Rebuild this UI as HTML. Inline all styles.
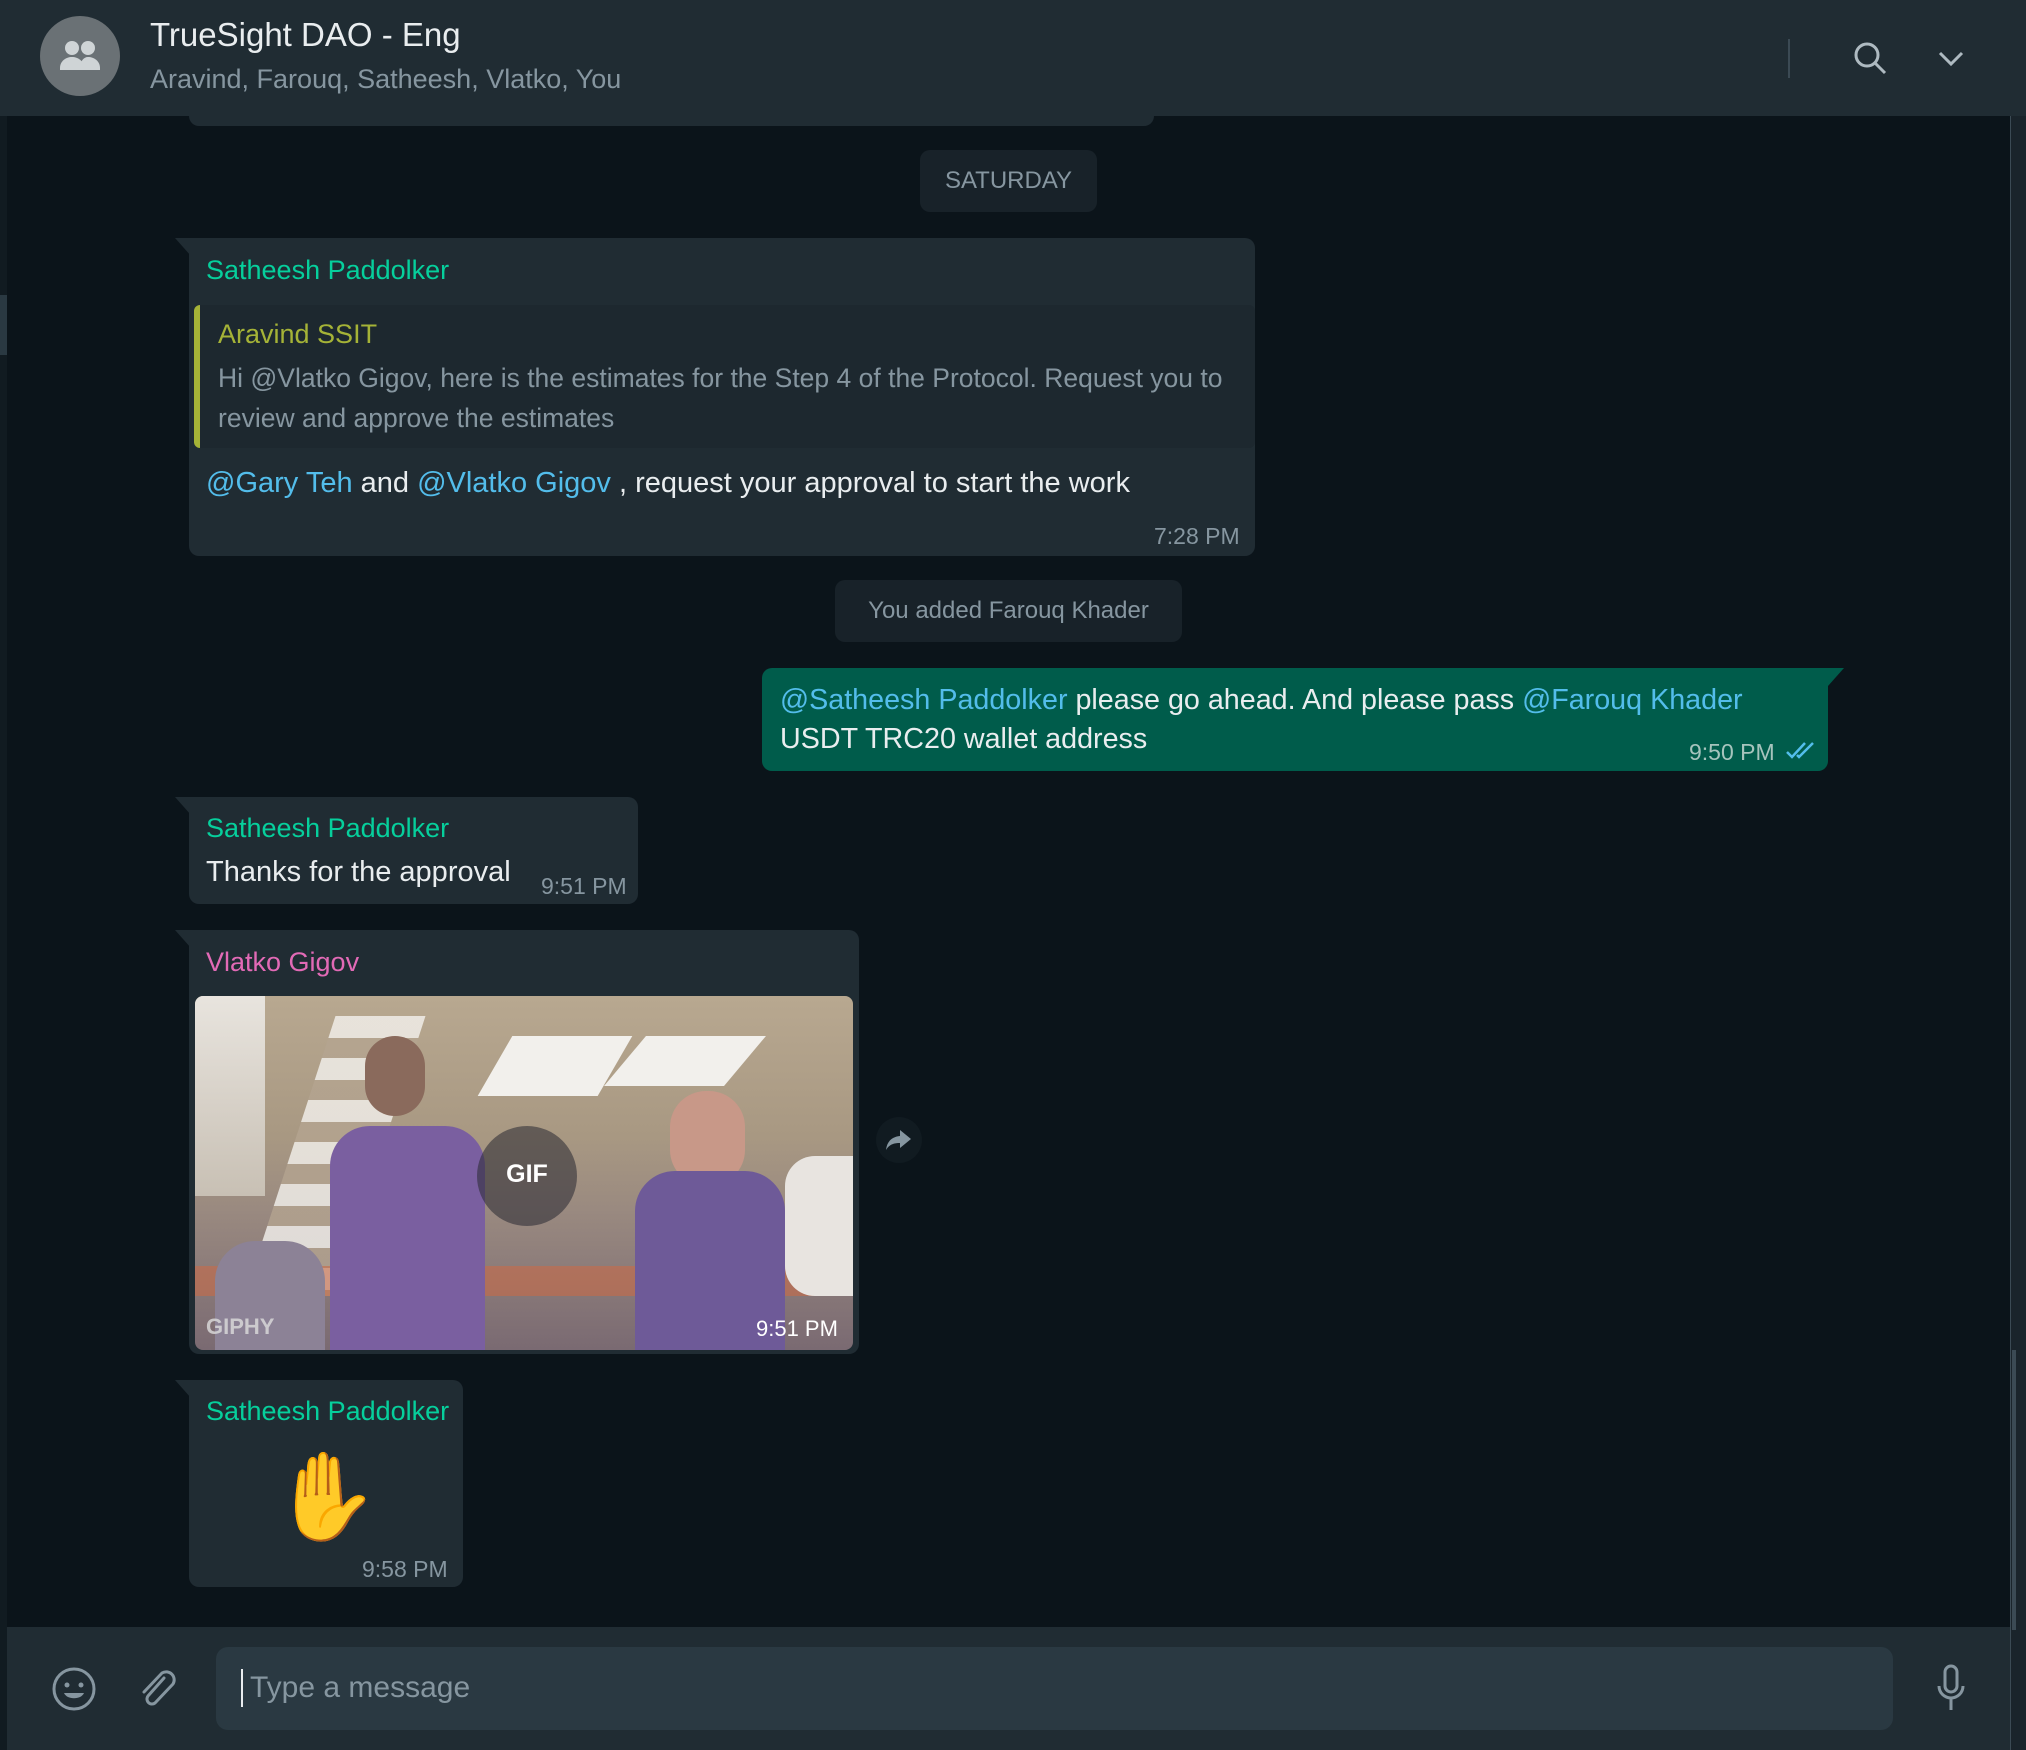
<!DOCTYPE html>
<html><head><meta charset="utf-8"><style>
*{margin:0;padding:0;box-sizing:border-box}
body{width:2026px;height:1750px;background:#0b141a;font-family:"Liberation Sans",sans-serif;position:relative;overflow:hidden}
.a{position:absolute}
.hdr{left:0;top:0;width:2026px;height:116px;background:#202c33}
.bub{background:#202c33;border-radius:10px}
.name{font-size:27px;white-space:nowrap}
.t{font-size:23px;color:#8696a0;white-space:nowrap}
.m{color:#53bdeb}
.txt{font-size:29px;color:#e9edef;white-space:nowrap}
.pill{background:#182229;border-radius:10px;color:#8696a0;font-size:24px;text-align:center}
</style></head><body>
<div class="a" style="left:0;top:0;width:7px;height:1750px;background:#111b21"></div>
<div class="a" style="left:0;top:295px;width:7px;height:60px;background:#2a3942"></div>
<div class="a" style="left:2010px;top:0;width:16px;height:1750px;background:#1a242b;border-left:1px solid #3b4a54"></div>
<div class="a" style="left:2012px;top:1350px;width:4px;height:280px;background:#3b4a54"></div>
<!-- header -->
<div class="a hdr"></div>
<div class="a" style="left:189px;top:112px;width:965px;height:14px;background:#202c33;border-radius:0 0 10px 10px"></div>
<div class="a" style="left:40px;top:16px;width:80px;height:80px;border-radius:50%;background:#6a7175"></div>
<svg class="a" style="left:52px;top:30px" width="56" height="50" viewBox="0 0 56 50"><circle cx="20" cy="18" r="7" fill="#cfd4d6"/><circle cx="36" cy="18" r="7" fill="#cfd4d6"/><path d="M8 38c0-7 6-11 12-11s12 4 12 11v2H8z" fill="#cfd4d6"/><path d="M28 38c0-7 4-11 8-11 6 0 12 4 12 11v2H30z" fill="#cfd4d6"/></svg>
<div class="a" style="left:150px;top:16px;font-size:33px;color:#e9edef">TrueSight DAO - Eng</div>
<div class="a" style="left:150px;top:64px;font-size:27px;color:#8696a0">Aravind, Farouq, Satheesh, Vlatko, You</div>
<div class="a" style="left:1788px;top:39px;width:2px;height:39px;background:#3b4a54"></div>
<svg class="a" style="left:1852px;top:40px" width="36" height="36" viewBox="0 0 36 36"><circle cx="15" cy="15" r="11" fill="none" stroke="#aebac1" stroke-width="3"/><path d="M23 23l10 10" stroke="#aebac1" stroke-width="3"/></svg>
<svg class="a" style="left:1937px;top:48px" width="28" height="20" viewBox="0 0 28 20"><path d="M3 5l11 11 11-11" fill="none" stroke="#aebac1" stroke-width="3"/></svg>
<!-- saturday -->
<div class="a pill" style="left:920px;top:150px;width:177px;height:62px;line-height:62px">SATURDAY</div>
<!-- bubble 1 -->
<div class="a bub" style="left:189px;top:238px;width:1066px;height:318px;border-top-left-radius:0"></div>
<div class="a" style="left:175px;top:238px;width:0;height:0;border-top:18px solid #202c33;border-left:16px solid transparent"></div>
<div class="a name" style="left:206px;top:255px;color:#06cf9c">Satheesh Paddolker</div>
<div class="a" style="left:194px;top:305px;width:1061px;height:143px;background:#1d282f;border-left:6px solid #a5b337;border-radius:6px"></div>
<div class="a name" style="left:218px;top:319px;color:#a5b337">Aravind SSIT</div>
<div class="a" style="left:218px;top:358px;font-size:26.5px;color:#8696a0;line-height:40px">Hi @Vlatko Gigov, here is the estimates for the Step 4 of the Protocol. Request you to<br>review and approve the estimates</div>
<div class="a txt" style="left:206px;top:467px"><span class="m">@Gary Teh</span> and <span class="m">@Vlatko Gigov</span> , request your approval to start the work</div>
<div class="a t" style="left:1154px;top:523px">7:28 PM</div>
<!-- added -->
<div class="a pill" style="left:835px;top:580px;width:347px;height:62px;line-height:62px">You added Farouq Khader</div>
<!-- outgoing -->
<div class="a" style="left:762px;top:668px;width:1066px;height:103px;background:#005c4b;border-radius:10px;border-top-right-radius:0"></div>
<div class="a" style="left:1828px;top:668px;width:0;height:0;border-top:18px solid #005c4b;border-right:16px solid transparent"></div>
<div class="a txt" style="left:780px;top:681px;line-height:39px;font-size:28.7px"><span class="m">@Satheesh Paddolker</span> please go ahead. And please pass <span class="m">@Farouq Khader</span><br>USDT TRC20 wallet address</div>
<div class="a t" style="left:1689px;top:739px;color:#a6c4bd">9:50 PM</div>
<svg class="a" style="left:1785px;top:741px" width="32" height="20" viewBox="0 0 32 20"><path d="M2 11l5 5L20 2M12 14l2 2L28 2" fill="none" stroke="#53bdeb" stroke-width="2.5"/></svg>
<!-- thanks -->
<div class="a bub" style="left:189px;top:797px;width:449px;height:107px;border-top-left-radius:0"></div>
<div class="a" style="left:175px;top:797px;border-top:18px solid #202c33;border-left:16px solid transparent"></div>
<div class="a name" style="left:206px;top:813px;color:#06cf9c">Satheesh Paddolker</div>
<div class="a txt" style="left:206px;top:856px">Thanks for the approval</div>
<div class="a t" style="left:541px;top:873px">9:51 PM</div>
<!-- vlatko -->
<div class="a bub" style="left:189px;top:930px;width:670px;height:424px;border-top-left-radius:0"></div>
<div class="a" style="left:175px;top:930px;border-top:18px solid #202c33;border-left:16px solid transparent"></div>
<div class="a name" style="left:206px;top:947px;color:#e26ab6">Vlatko Gigov</div>
<div class="a" style="left:195px;top:996px;width:658px;height:354px;border-radius:8px;overflow:hidden;background:linear-gradient(180deg,#b8a890 0%,#a89882 40%,#9a8a80 60%,#7a6a72 100%)">
 <div class="a" style="left:0;top:0;width:70px;height:200px;background:linear-gradient(180deg,#e8e4de,#c8c0b4)"></div>
 <div class="a" style="left:95px;top:20px;width:90px;height:280px;background:repeating-linear-gradient(180deg,#f4f2ee 0 22px,#b4a490 22px 42px);transform:skewX(-18deg);opacity:.8"></div>
 <div class="a" style="left:300px;top:40px;width:120px;height:60px;background:#f2f0ec;transform:skewX(-30deg)"></div>
 <div class="a" style="left:430px;top:40px;width:120px;height:50px;background:#f2f0ec;transform:skewX(-40deg)"></div>
 <div class="a" style="left:0;top:270px;width:658px;height:30px;background:#c86a48;opacity:.6"></div>
 <div class="a" style="left:170px;top:40px;width:60px;height:80px;border-radius:30px;background:#8a6a5c"></div>
 <div class="a" style="left:135px;top:130px;width:155px;height:230px;background:#7a5fa0;border-radius:40px 40px 0 0"></div>
 <div class="a" style="left:475px;top:95px;width:75px;height:95px;border-radius:36px;background:#c89888"></div>
 <div class="a" style="left:440px;top:175px;width:150px;height:190px;background:#6e5a98;border-radius:40px 40px 0 0"></div>
 <div class="a" style="left:590px;top:160px;width:80px;height:140px;background:#e8e4e0;border-radius:30px 0 0 30px"></div>
 <div class="a" style="left:20px;top:245px;width:110px;height:110px;background:#8c8296;border-radius:40px 40px 0 0"></div>
 <div class="a" style="left:282px;top:130px;width:100px;height:100px;border-radius:50%;background:rgba(40,40,50,.55)"></div>
 <div class="a" style="left:282px;top:128px;width:100px;height:100px;line-height:100px;text-align:center;font-size:25px;font-weight:bold;color:#fff">GIF</div>
 <div class="a" style="left:11px;top:318px;font-size:22px;font-weight:bold;color:#ddd;opacity:.8">GIPHY</div>
 <div class="a" style="left:561px;top:320px;font-size:22px;color:#fff">9:51 PM</div>
</div>
<div class="a" style="left:876px;top:1117px;width:46px;height:46px;border-radius:50%;background:#111b21"></div>
<svg class="a" style="left:884px;top:1127px" width="30" height="26" viewBox="0 0 30 26"><path d="M16 3l11 9-11 9v-5c-7 0-11 2-14 7 1-8 5-13 14-14z" fill="#8696a0"/></svg>
<!-- sticker -->
<div class="a bub" style="left:189px;top:1380px;width:274px;height:207px;border-top-left-radius:0"></div>
<div class="a" style="left:175px;top:1380px;border-top:18px solid #202c33;border-left:16px solid transparent"></div>
<div class="a name" style="left:206px;top:1396px;color:#06cf9c">Satheesh Paddolker</div>
<div class="a" style="left:272px;top:1442px;font-size:86px;line-height:110px">✋</div>
<div class="a t" style="left:362px;top:1556px">9:58 PM</div>
<!-- footer -->
<div class="a" style="left:7px;top:1627px;width:2003px;height:123px;background:#202c33"></div>
<div class="a" style="left:216px;top:1647px;width:1677px;height:83px;background:#2a3942;border-radius:12px"></div>
<div class="a" style="left:241px;top:1669px;width:2px;height:38px;background:#e9edef"></div>
<div class="a" style="left:250px;top:1671px;font-size:30px;color:#8696a0">Type a message</div>
<svg class="a" style="left:50px;top:1665px" width="48" height="48" viewBox="0 0 48 48"><circle cx="24" cy="24" r="20" fill="none" stroke="#8696a0" stroke-width="3"/><circle cx="17" cy="20" r="2.5" fill="#8696a0"/><circle cx="31" cy="20" r="2.5" fill="#8696a0"/><path d="M14 28c3 7 17 7 20 0z" fill="#8696a0"/></svg>
<svg class="a" style="left:134px;top:1666px" width="46" height="46" viewBox="0 0 46 46"><path d="M30 12L14 30a5 5 0 007 7l18-19a8 8 0 00-11-11L10 26" fill="none" stroke="#8696a0" stroke-width="3" stroke-linecap="round"/></svg>
<svg class="a" style="left:1936px;top:1664px" width="30" height="48" viewBox="0 0 30 48"><rect x="9" y="2" width="12" height="26" rx="6" fill="none" stroke="#8696a0" stroke-width="3"/><path d="M3 22a12 12 0 0024 0M15 34v12" fill="none" stroke="#8696a0" stroke-width="3"/></svg>
</body></html>
